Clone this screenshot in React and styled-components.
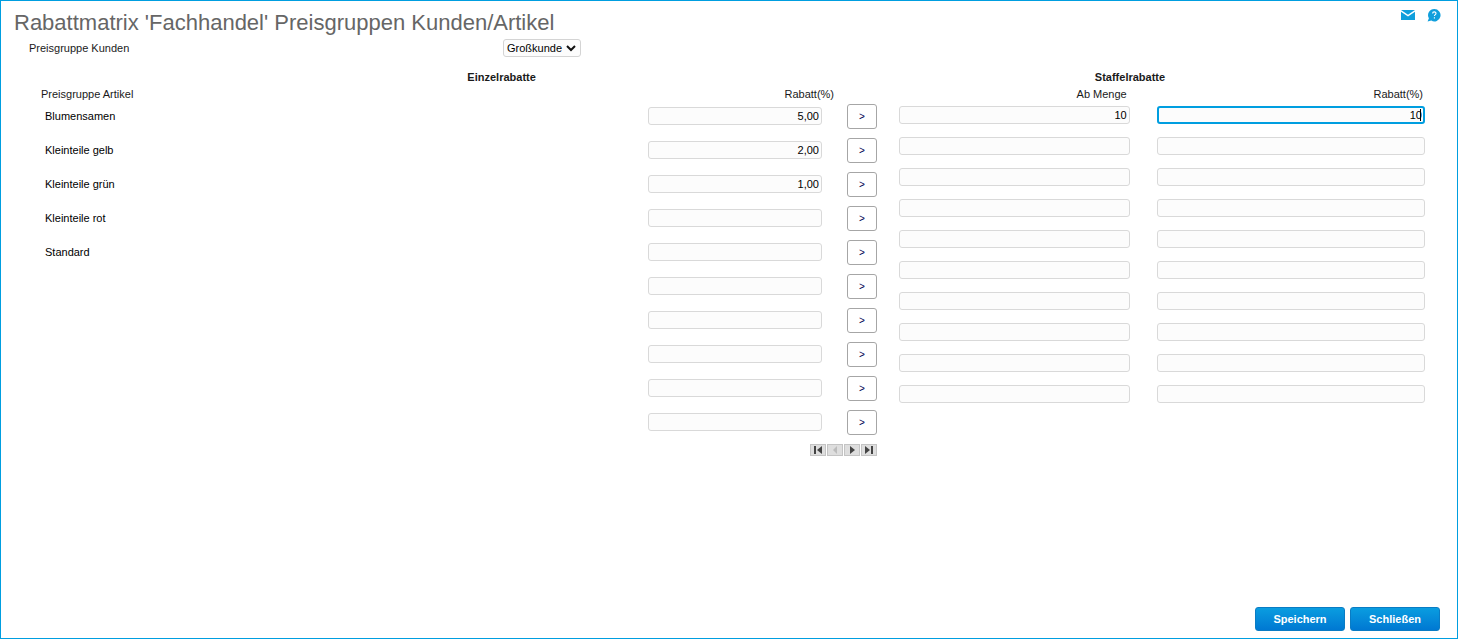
import React from "react";
import styled, { createGlobalStyle } from "styled-components";

const GlobalStyle = createGlobalStyle`
  *, *::before, *::after { box-sizing: border-box; }
  body {
    margin: 0;
    background: #fff;
    color: #1a1a1a;
    font-family: "Liberation Sans", Arial, sans-serif;
    font-size: 11px;
  }
  button, input, select { font: inherit; margin: 0; }
`;

const Frame = styled.div`
  display: flex;
  flex-direction: column;
  min-height: 100vh;
  border: 1px solid #009ee0;
`;

const Header = styled.header`
  display: flex;
  justify-content: space-between;
  align-items: flex-start;
  padding: 7px 16px 0 13px;
`;

const Title = styled.h1`
  margin: 0;
  color: #666;
  font-size: 22px;
  font-weight: 400;
  line-height: 29px;
`;

const HeaderLinks = styled.nav`
  display: flex;
  gap: 12px;
`;

const IconLink = styled.a`
  display: flex;
  align-items: center;
  height: 14px;
`;

const FilterRow = styled.div`
  display: grid;
  grid-template-columns: 474fr 927fr;
  align-items: center;
  margin-top: 2px;
  padding: 0 27px 0 28px;
`;

const SelectBox = styled.div`
  position: relative;
  width: 78px;

  svg {
    position: absolute;
    top: 6px;
    right: 5px;
    pointer-events: none;
  }
`;

const Select = styled.select`
  appearance: none;
  display: block;
  width: 100%;
  height: 18px;
  padding: 0 16px 0 3px;
  border: 1px solid #d4d4d4;
  border-radius: 3px;
  background-color: #fcfcfc;
  color: #000;
`;

const Main = styled.main`
  display: flex;
  flex: 1;
  align-items: flex-start;
  gap: 22px;
  margin-top: 12px;
  padding: 0 32px 0 40px;
`;

const Panel = styled.section`
  flex: ${(p) => p.$grow} 1 0;
  min-width: 0;
`;

const Table = styled.table`
  width: 100%;
  table-layout: fixed;
  border-collapse: collapse;
`;

const Col = styled.col`
  width: ${(p) => p.$width};
`;

const GroupHead = styled.th`
  height: 17px;
  padding: 0 ${(p) => p.$right || "0"} 0 0;
  line-height: 17px;
  text-align: ${(p) => p.$align || "left"};
`;

const ColumnHead = styled.th`
  height: 17px;
  padding: 0 ${(p) => p.$right || "0"} 0 0;
  font-weight: 400;
  line-height: 17px;
  text-align: ${(p) => p.$align || "right"};
`;

const NameCell = styled.td`
  height: 34px;
  padding: 1px 4px 0;
  color: #000;
  line-height: 25px;
  vertical-align: top;
`;

const FieldCell = styled.td`
  height: ${(p) => p.$height};
  padding: ${(p) => p.$pad};
  vertical-align: top;
`;

const FieldBox = styled.div`
  position: relative;
  width: ${(p) => p.$width || "100%"};
  margin-left: auto;
`;

const Field = styled.input`
  display: block;
  width: 100%;
  height: 18px;
  padding: 0 2px;
  border: 1px solid #d9d9d9;
  border-radius: 3px;
  outline: none;
  background: #fcfcfc;
  color: #000;
  text-align: right;

  &:focus {
    padding: 0 1px;
    border: 2px solid #009ee0;
    caret-color: transparent;
  }
`;

const Caret = styled.span`
  display: none;
  position: absolute;
  top: 3px;
  right: 4px;
  width: 1px;
  height: 12px;
  background: #000;

  ${Field}:focus + & { display: block; }
`;

const StepButton = styled.button`
  display: block;
  width: 30px;
  height: 25px;
  margin-left: auto;
  padding: 0;
  border: 1px solid #a6a6a6;
  border-radius: 3px;
  background: #fff;
  color: #000050;
  font-size: 10px;
`;

const Pager = styled.div`
  display: flex;
  justify-content: flex-end;
  gap: 1px;
  margin-top: 1px;
`;

const PagerButton = styled.button`
  display: flex;
  align-items: center;
  justify-content: center;
  width: 16px;
  height: 12px;
  padding: 0;
  border: 1px solid #c4c4c4;
  background: #dedede;
  color: #444;

  &:disabled { color: #bcbcbc; }
`;

const Footer = styled.footer`
  display: flex;
  justify-content: flex-end;
  gap: 5px;
  padding: 0 17px 7px;
`;

const ActionButton = styled.button`
  width: 90px;
  height: 24px;
  padding: 0;
  border: 1px solid #0a7cc4;
  border-radius: 3px;
  background: linear-gradient(#0a9de0, #0078d2);
  color: #fff;
  font-weight: 700;
`;

const groups = [
  ["Blumensamen", "5,00"],
  ["Kleinteile gelb", "2,00"],
  ["Kleinteile grün", "1,00"],
  ["Kleinteile rot", ""],
  ["Standard", ""],
  ["", ""],
  ["", ""],
  ["", ""],
  ["", ""],
  ["", ""],
];

const steps = Array.from({ length: 10 }, (_, i) => (i === 0 ? ["10", "10"] : ["", ""]));

const pages = [
  ["Erste Seite", "M1 0h2v8H1zM9 0v8L4 4z", false],
  ["Vorherige Seite", "M7 0v8L3 4z", true],
  ["Nächste Seite", "M3 0v8l5-4z", false],
  ["Letzte Seite", "M1 0v8l5-4zM7 0h2v8H7z", false],
];

export default function App() {
  return (
    <>
      <GlobalStyle />
      <Frame>
        <Header>
          <Title>Rabattmatrix 'Fachhandel' Preisgruppen Kunden/Artikel</Title>
          <HeaderLinks>
            <IconLink href="#nachricht" aria-label="Nachricht">
              <svg width="14" height="10" viewBox="0 0 14 10">
                <path d="M0 0h14L7 4.8z" fill="#109fdc" />
                <path d="M0 1.8L7 6.4l7-4.6V10H0z" fill="#109fdc" />
              </svg>
            </IconLink>
            <IconLink href="#hilfe" aria-label="Hilfe">
              <svg width="14" height="13" viewBox="0 0 14 13">
                <path d="M7.3 0a6.2 6.2 0 1 1-3 11.6L0.6 12.6 1.9 9.3A6.2 6.2 0 0 1 7.3 0z" fill="#109fdc" />
                <path d="M5.6 4.4c0-2 3.4-2 3.4 0 0 1.2-1.6 1.2-1.6 2.7M7.4 8.3v1.3" fill="none" stroke="#fff" strokeWidth="1.1" />
              </svg>
            </IconLink>
          </HeaderLinks>
        </Header>

        <FilterRow>
          <label htmlFor="kunden">Preisgruppe Kunden</label>
          <SelectBox>
            <Select id="kunden" defaultValue="Großkunde">
              <option>Großkunde</option>
            </Select>
            <svg width="10" height="7" viewBox="0 0 10 7" aria-hidden="true">
              <path d="M1 1l4 4 4-4" fill="none" stroke="#111" strokeWidth="2" />
            </svg>
          </SelectBox>
        </FilterRow>

        <Main>
          <Panel $grow={836}>
            <Table>
              <colgroup>
                <Col $width="51%" />
                <Col />
                <Col $width="43px" />
              </colgroup>
              <thead>
                <tr>
                  <td />
                  <GroupHead colSpan={2}>Einzelrabatte</GroupHead>
                </tr>
                <tr>
                  <ColumnHead $align="left">Preisgruppe Artikel</ColumnHead>
                  <ColumnHead>Rabatt(%)</ColumnHead>
                  <td />
                </tr>
              </thead>
              <tbody>
                {groups.map(([name, value], i) => (
                  <tr key={i}>
                    <NameCell>{name}</NameCell>
                    <FieldCell $height="34px" $pad="4px 12px 0 0">
                      <FieldBox $width="49%">
                        <Field defaultValue={value} aria-label={`Rabatt ${name || i + 1}`} />
                      </FieldBox>
                    </FieldCell>
                    <FieldCell $height="34px" $pad="1px 0 0">
                      <StepButton type="button">&gt;</StepButton>
                    </FieldCell>
                  </tr>
                ))}
              </tbody>
            </Table>
            <Pager>
              {pages.map(([label, d, disabled]) => (
                <PagerButton key={label} type="button" aria-label={label} disabled={disabled}>
                  <svg width="10" height="8" viewBox="0 0 10 8">
                    <path d={d} fill="currentColor" />
                  </svg>
                </PagerButton>
              ))}
            </Pager>
          </Panel>

          <Panel $grow={526}>
            <Table>
              <colgroup>
                <Col $width="49%" />
                <Col />
              </colgroup>
              <thead>
                <tr>
                  <GroupHead colSpan={2} $align="center" $right="64px">Staffelrabatte</GroupHead>
                </tr>
                <tr>
                  <ColumnHead $right="30px">Ab Menge</ColumnHead>
                  <ColumnHead $right="2px">Rabatt(%)</ColumnHead>
                </tr>
              </thead>
              <tbody>
                {steps.map(([amount, discount], i) => (
                  <tr key={i}>
                    <FieldCell $height="31px" $pad="3px 27px 0 0">
                      <Field defaultValue={amount} aria-label={`Ab Menge ${i + 1}`} />
                    </FieldCell>
                    <FieldCell $height="31px" $pad="3px 0 0">
                      <FieldBox>
                        <Field
                          defaultValue={discount}
                          aria-label={`Staffelrabatt ${i + 1}`}
                          autoFocus={i === 0}
                        />
                        <Caret />
                      </FieldBox>
                    </FieldCell>
                  </tr>
                ))}
              </tbody>
            </Table>
          </Panel>
        </Main>

        <Footer>
          <ActionButton type="button">Speichern</ActionButton>
          <ActionButton type="button">Schließen</ActionButton>
        </Footer>
      </Frame>
    </>
  );
}
